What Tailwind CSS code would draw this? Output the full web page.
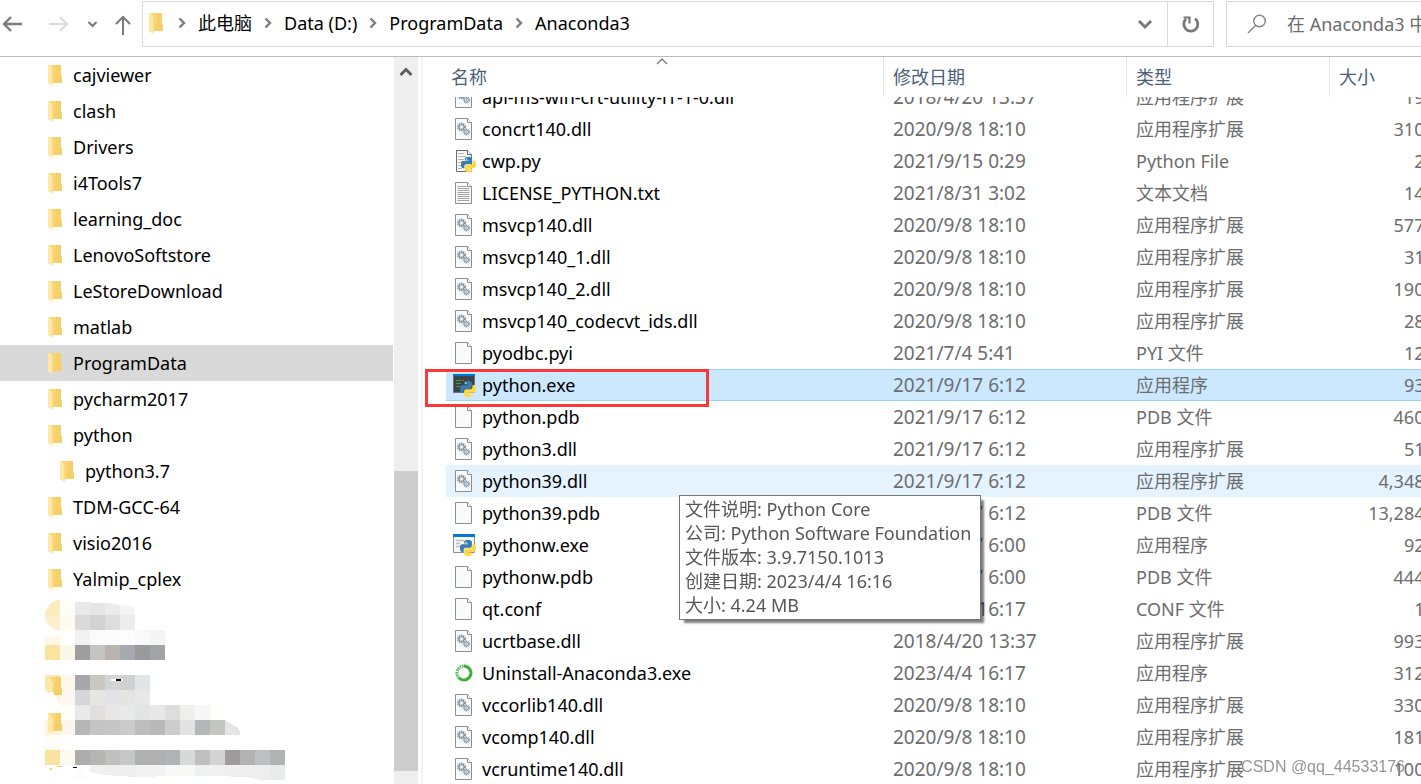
<!DOCTYPE html>
<html lang="zh-CN">
<head>
    <meta charset="UTF-8">
    <meta name="viewport" content="width=device-width, initial-scale=1.0">
    <title>Anaconda3</title>
    <script src="https://cdn.jsdelivr.net/npm/@tailwindcss/browser@4"></script>
</head>
<body class="relative flex h-screen flex-col overflow-hidden bg-white font-['Noto_Sans','Noto_Sans_CJK_SC',sans-serif] text-[18px] leading-6 text-black">

    <!-- Icons -->
    <svg class="hidden" aria-hidden="true">
        <symbol id="folder" viewBox="0 0 16 22">
            <path d="M3 1h11v11l1 1v6H3z" fill="#f9d873"/>
            <path d="M9 1h5v11l1 1v6H7z" fill="#f5d06a"/>
            <path d="M5 4l1 1v14l-1 3z" fill="#f0c860"/>
            <path d="M1 1h2l2.500 4v16.500L1 19.500z" fill="#ffe8a6"/>
        </symbol>
        <symbol id="page" viewBox="0 0 24 24">
            <path d="M3.500 1.500h12l4 4v17h-16z" fill="#f9fafb" stroke="#8e8e8e"/>
            <path d="M15.500 1.500v4h4" fill="#fff" stroke="#8e8e8e"/>
        </symbol>
        <symbol id="dll" viewBox="0 0 24 24">
            <use href="#page"/>
            <circle cx="9.500" cy="10" r="3.500" fill="#dfe3e6" stroke="#87929b" stroke-width="2" stroke-dasharray="1.4 .8"/>
            <circle cx="9.500" cy="10" r="2.600" fill="#c9d0d5" stroke="#87929b"/>
            <circle cx="9.500" cy="10" r="1.100" fill="#fff"/>
            <circle cx="14.500" cy="15" r="2.600" fill="#fff" stroke="#7f98ab" stroke-width="1.600" stroke-dasharray="1.2 .7"/>
            <circle cx="14.500" cy="15" r="2" fill="#e6eef4" stroke="#7f98ab" stroke-width=".8"/>
            <circle cx="14.500" cy="15" r=".8" fill="#7f98ab"/>
        </symbol>
        <symbol id="txt" viewBox="0 0 24 24">
            <use href="#page"/>
            <path d="M5.500 5.500h9M5.500 7.500h12M5.500 9.500h12M5.500 11.500h12M5.500 13.500h12M5.500 15.500h12M5.500 17.500h12M5.500 19.500h12" stroke="#a3a3a3"/>
        </symbol>
        <symbol id="python" viewBox="0 0 24 24">
            <path fill="#3a7bb0" d="M14.25.18l.9.2.73.26.59.3.45.32.34.34.25.34.16.33.1.3.04.26.02.2-.01.13V8.5l-.05.63-.13.55-.21.46-.26.38-.3.31-.33.25-.35.19-.35.14-.33.1-.3.07-.26.04-.21.02H8.77l-.69.05-.59.14-.5.22-.41.27-.33.32-.27.35-.2.36-.15.37-.1.35-.07.32-.04.27-.02.21v3.06H3.17l-.21-.03-.28-.07-.32-.12-.35-.18-.36-.26-.36-.36-.35-.46-.32-.59-.28-.73-.21-.88-.14-1.05-.05-1.23.06-1.22.16-1.04.24-.87.32-.71.36-.57.4-.44.42-.33.42-.24.4-.16.36-.1.32-.05.24-.01h.16l.06.01h8.16v-.83H6.18l-.01-2.75-.02-.37.05-.34.11-.31.17-.28.25-.26.31-.23.38-.2.44-.18.51-.15.58-.12.64-.1.71-.06.77-.04.84-.02 1.27.05z"/>
            <path fill="#ffd845" d="M21.1 6.11l.28.06.32.12.35.18.36.27.36.35.35.47.32.59.28.73.21.88.14 1.04.05 1.23-.06 1.23-.16 1.04-.24.86-.32.71-.36.57-.4.45-.42.33-.42.24-.4.16-.36.09-.32.05-.24.02-.16-.01h-8.22v.82h5.84l.01 2.76.02.36-.05.34-.11.31-.17.29-.25.25-.31.24-.38.2-.44.17-.51.15-.58.13-.64.09-.71.07-.77.04-.84.01-1.27-.04-1.07-.14-.9-.2-.73-.25-.59-.3-.45-.33-.34-.34-.25-.34-.16-.33-.1-.3-.04-.25-.02-.2.01-.13v-5.34l.05-.64.13-.54.21-.46.26-.38.3-.32.33-.24.35-.2.35-.14.33-.1.3-.06.26-.04.21-.02.13-.01h5.84l.69-.05.59-.14.5-.21.41-.28.33-.32.27-.35.2-.36.15-.36.1-.35.07-.32.04-.28.02-.21V6.07h2.09l.14.01z"/>
            <circle cx="8.700" cy="3.200" r="1.100" fill="#fff"/>
            <circle cx="15.300" cy="20.800" r="1.100" fill="#fff"/>
        </symbol>
        <symbol id="py" viewBox="0 0 24 24">
            <path d="M4.500 1.500h11l4 4v17h-15z" fill="#fafafa" stroke="#6b6b6b"/>
            <path d="M15.500 1.500v4h4" fill="#fff" stroke="#6b6b6b"/>
            <path d="M6 4.500h6M6 7.500h8M6 10.500h6M6 13.500h4M6 16.500h3M6 19.500h4" stroke="#b5b5b5"/>
            <use href="#python" x="9" y="8" width="15" height="15"/>
        </symbol>
        <symbol id="console" viewBox="0 0 24 24">
            <path d="M1 1h22v19H1z" fill="#6f7478"/>
            <path d="M2 3h20v16H2z" fill="#3f4244"/>
            <path d="M1 1h22v2H1z" fill="#0078d7"/>
            <path d="M4 7.500h5M10 7.500h2M4 10.500h5M4 13.500h4" stroke="#3f9b42"/>
            <use href="#python" x="8" y="8" width="16" height="16"/>
        </symbol>
        <symbol id="window" viewBox="0 0 24 24">
            <path d="M1.500 1.500h21v18h-21z" fill="#f6f6f6" stroke="#8b8f92"/>
            <path d="M1 1h22v3H1z" fill="#0078d7"/>
            <path d="M4 7.500h8M4 10.500h4M4 13.500h5" stroke="#c0c0c0" stroke-width="1.500"/>
            <use href="#python" x="8" y="7" width="16" height="16"/>
        </symbol>
        <symbol id="anaconda" viewBox="0 0 24 24">
            <path d="M12 5a7 7 0 1 1-5 12" fill="none" stroke="#3eae3a" stroke-width="3"/>
            <path d="M7 17a7 7 0 0 1 5-12" fill="none" stroke="#55b952" stroke-width="3" stroke-dasharray="1.6 .8"/>
        </symbol>
        <symbol id="crumb" viewBox="0 0 8 12">
            <path d="M1.500 1.500L6 6l-4.500 4.500" fill="none" stroke="#7d7d7d" stroke-width="2.400"/>
        </symbol>
    </svg>

    <header class="flex h-[57px] shrink-0 items-start border-b border-[#bcbcbc] pt-px">
        <nav class="flex h-[46px] w-[142px] shrink-0 items-center text-[#7a7a7a]">
            <button type="button" aria-label="后退">
                <svg class="size-6" viewBox="0 0 24 24" fill="none" stroke="currentColor" stroke-width="2.400"><path d="M22 12H4M11 5l-7 7 7 7"/></svg>
            </button>
            <button type="button" aria-label="前进" class="ml-[22px] text-[#dcdcdc]">
                <svg class="size-6" viewBox="0 0 24 24" fill="none" stroke="currentColor" stroke-width="2.200"><path d="M3 12h18M14 5l7 7-7 7"/></svg>
            </button>
            <button type="button" aria-label="最近浏览的位置" class="ml-3.5">
                <svg class="size-4" viewBox="0 0 16 16" fill="none" stroke="currentColor" stroke-width="2.200"><path d="M4.500 6l4 4 4-4"/></svg>
            </button>
            <button type="button" aria-label="上移" class="ml-[11px]">
                <svg class="size-6" viewBox="0 0 24 24" fill="none" stroke="currentColor" stroke-width="2"><path d="M12 23V5M5 12l7-7 7 7"/></svg>
            </button>
        </nav>

        <div class="flex h-[46px] min-w-0 flex-1 border border-[#d9d9d9]">
            <div class="flex min-w-0 flex-1 items-center gap-3 pb-0.5 pl-[5px]">
                <svg class="h-[22px] w-4"><use href="#folder"/></svg>
                <svg class="ml-0.5 h-3 w-2"><use href="#crumb"/></svg>
                <a href="#">此电脑</a>
                <svg class="h-3 w-2"><use href="#crumb"/></svg>
                <a href="#">Data (D:)</a>
                <svg class="h-3 w-2"><use href="#crumb"/></svg>
                <a href="#">ProgramData</a>
                <svg class="h-3 w-2"><use href="#crumb"/></svg>
                <a href="#">Anaconda3</a>
            </div>
            <button type="button" aria-label="展开" class="flex w-11 items-center justify-center">
                <svg class="size-4" viewBox="0 0 16 16" fill="none" stroke="#7a7a7a" stroke-width="3"><path d="M2 5l6 6 6-6"/></svg>
            </button>
            <button type="button" aria-label="刷新" class="flex w-[46px] items-center justify-center border-l border-[#d9d9d9]">
                <svg class="size-5" viewBox="0 0 20 20" fill="none" stroke="#777" stroke-width="2.800"><path d="M14 4.500A7 7 0 1 1 5 5"/><path d="M2.500 3.500h6v6" stroke-width="2.200"/></svg>
            </button>
        </div>

        <label class="ml-3 flex h-[46px] w-[195px] shrink-0 items-center border border-r-0 border-[#d9d9d9] pl-5">
            <svg class="size-5 shrink-0" viewBox="0 0 20 20" fill="none" stroke="#848484" stroke-width="1.400"><circle cx="12.500" cy="7" r="5.800"/><path d="M8.500 11.500L1 19"/></svg>
            <input type="text" aria-label="搜索" placeholder="在 Anaconda3 中搜索" class="ml-5 min-w-0 flex-1 placeholder:text-[#6d6d6d] focus:outline-none">
        </label>
    </header>

    <div class="flex min-h-0 flex-1">
        <!-- Navigation pane -->
        <aside class="w-[394px] shrink-0 overflow-hidden pr-px">
            <ul id="tree"></ul>
            <svg class="ml-11 h-[187px] w-[242px]" viewBox="-1 0 242 187" shape-rendering="crispEdges" aria-hidden="true">
                <g id="mosaic"></g>
                <use href="#folder" x="2" y="79" width="16" height="22"/>
                <use href="#folder" x="2" y="115" width="16" height="22"/>
                <path d="M8 95l7 13H0V96z" fill="#fff"/>
                <path d="M66 82h12v2H66z" fill="#fff"/>
                <path d="M71 82h5v2h-5zM28 170h4v1h-4z" fill="#111"/>
                <path d="M12 169h5v1h-5zM5 171h2v2H5z" fill="#f6cf68"/>
            </svg>
        </aside>

        <div class="flex w-6 shrink-0 flex-col bg-[#efefef]">
            <button type="button" aria-label="向上滚动" class="flex h-[30px] items-center justify-center">
                <svg class="size-4" viewBox="0 0 16 16" fill="none" stroke="#5c5c5c" stroke-width="2.800"><path d="M2.500 11L8 5.500l5.500 5.500"/></svg>
            </button>
            <div class="h-[384px] shrink"></div>
            <div class="min-h-10 flex-1 bg-[#cdcdcd]"></div>
            <div class="h-[13px] shrink-0"></div>
        </div>
        <div class="ml-[3px] w-0.5 shrink-0 bg-[#f4f4f4]"></div>

        <!-- File list -->
        <main class="relative ml-px min-w-0 flex-1">
            <div class="h-full overflow-hidden">
                <!-- list is scrolled down by half a row, the header stays put -->
                <table class="-mt-4 ml-[22px] w-[1014px] table-fixed border-separate border-spacing-0 whitespace-nowrap text-left">
                    <thead class="text-[#4c607a]">
                        <tr class="h-10">
                            <th scope="col" class="sticky top-0 z-10 w-[438px] border-r border-[#e5e5e5] bg-white p-0 pl-[5px] font-normal">名称
                                <svg class="absolute top-0 left-[210px] h-2 w-3" viewBox="0 0 12 8" fill="none" stroke="#6d6d6d" stroke-width="1.200"><path d="M1 7l5-5 5 5"/></svg>
                            </th>
                            <th scope="col" class="sticky top-0 z-10 w-[243px] border-r border-[#e5e5e5] bg-white p-0 pl-[9px] font-normal">修改日期</th>
                            <th scope="col" class="sticky top-0 z-10 w-[203px] border-r border-[#e5e5e5] bg-white p-0 pl-[9px] font-normal">类型</th>
                            <th scope="col" class="sticky top-0 z-10 w-[130px] bg-white p-0 pl-[9px] font-normal">大小</th>
                        </tr>
                    </thead>
                    <tbody id="files"></tbody>
                </table>
            </div>

            <div role="tooltip" class="absolute top-[438px] left-[255px] z-20 border border-[#767676] bg-white pt-px pr-[9px] pb-0.5 pl-[5px] whitespace-nowrap text-[#575757] shadow-[4px_4px_2px_-1px_rgba(0,0,0,0.5)]">
                <p>文件说明: Python Core</p>
                <p>公司: Python Software Foundation</p>
                <p>文件版本: 3.9.7150.1013</p>
                <p>创建日期: 2023/4/4 16:16</p>
                <p>大小: 4.24 MB</p>
            </div>
        </main>
    </div>

    <div class="absolute right-4 bottom-[5px] z-20 font-['Liberation_Sans',sans-serif] text-[16px] text-[#8a8a8a]/90">CSDN @qq_44533176</div>

    <script>
        const folders = [
            'cajviewer', 'clash', 'Drivers', 'i4Tools7', 'learning_doc', 'LenovoSoftstore', 'LeStoreDownload',
            'matlab', 'ProgramData', 'pycharm2017', 'python', 'python3.7', 'TDM-GCC-64', 'visio2016', 'Yalmip_cplex'
        ];

        const DLL = '应用程序扩展';
        const EXE = '应用程序';

        // icon, name, modified, type, size in KB
        const files = [
            ['dll', 'api-ms-win-crt-utility-l1-1-0.dll', '2018/4/20 13:37', DLL, '19'],
            ['dll', 'concrt140.dll', '2020/9/8 18:10', DLL, '310'],
            ['py', 'cwp.py', '2021/9/15 0:29', 'Python File', '2'],
            ['txt', 'LICENSE_PYTHON.txt', '2021/8/31 3:02', '文本文档', '14'],
            ['dll', 'msvcp140.dll', '2020/9/8 18:10', DLL, '577'],
            ['dll', 'msvcp140_1.dll', '2020/9/8 18:10', DLL, '31'],
            ['dll', 'msvcp140_2.dll', '2020/9/8 18:10', DLL, '190'],
            ['dll', 'msvcp140_codecvt_ids.dll', '2020/9/8 18:10', DLL, '28'],
            ['page', 'pyodbc.pyi', '2021/7/4 5:41', 'PYI 文件', '12'],
            ['console', 'python.exe', '2021/9/17 6:12', EXE, '93'],
            ['page', 'python.pdb', '2021/9/17 6:12', 'PDB 文件', '460'],
            ['dll', 'python3.dll', '2021/9/17 6:12', DLL, '51'],
            ['dll', 'python39.dll', '2021/9/17 6:12', DLL, '4,348'],
            ['page', 'python39.pdb', '2021/9/17 6:12', 'PDB 文件', '13,284'],
            ['window', 'pythonw.exe', '2021/9/17 6:00', EXE, '92'],
            ['page', 'pythonw.pdb', '2021/9/17 6:00', 'PDB 文件', '444'],
            ['page', 'qt.conf', '2023/4/4 16:17', 'CONF 文件', '1'],
            ['dll', 'ucrtbase.dll', '2018/4/20 13:37', DLL, '993'],
            ['anaconda', 'Uninstall-Anaconda3.exe', '2023/4/4 16:17', EXE, '312'],
            ['dll', 'vccorlib140.dll', '2020/9/8 18:10', DLL, '330'],
            ['dll', 'vcomp140.dll', '2020/9/8 18:10', DLL, '181'],
            ['dll', 'vcruntime140.dll', '2020/9/8 18:10', DLL, '100']
        ];

        document.getElementById('tree').innerHTML = folders.map(name => {
            const indent = name === 'python3.7' ? 'pl-[59px]' : 'pl-[47px]';
            const current = name === 'ProgramData' ? 'bg-[#d9d9d9]' : '';
            return `<li><a href="#" class="flex h-9 items-center gap-2.5 ${indent} ${current}">
                <svg class="h-[22px] w-4"><use href="#folder"/></svg>${name}</a></li>`;
        }).join('');

        document.getElementById('files').innerHTML = files.map(([icon, name, date, type, size]) => {
            let line = '';
            let mark = '';
            if (name === 'python.exe') {
                line = 'bg-[#cce8ff] border-y border-[#99d1ff]';
                mark = '<span class="absolute -top-px -left-[21px] z-10 h-[38px] w-[284px] border-3 border-[#fb3838]"></span>';
            } else if (name === 'python39.dll') {
                line = 'bg-[#e5f3ff]';
            }
            return `<tr class="h-8 text-[#6d6d6d]">
                <td class="relative p-0 pl-1.5 text-black ${line}"><div class="flex items-center gap-1.5"><svg class="size-6 shrink-0"><use href="#${icon}"/></svg>${name}</div>${mark}</td>
                <td class="p-0 pl-[9px] text-[19px] ${line}">${date}</td>
                <td class="p-0 pl-[9px] ${line}">${type}</td>
                <td class="p-0 pr-2 text-right ${line}">${size} KB</td>
            </tr>`;
        }).join('');

        // Blurred-out folder names: 15px cells, one string per row
        const cells = [
            [3, 'fbecc0 fefdf8 e9e9e9 e5e5e5 ebebeb f3f5f5'],
            [18, 'fcefcb fdfaf1 dadada d2d2d2 dddddd ebedef'],
            [33, 'fff8e6 fffffe f2f2f2 fbfbfb fcfcfc fdfdfd f9f9f9 f4f4f4'],
            [48, 'fae49f fbf8ea 9e9ea0 c4c4c2 bab4b0 a6aab0 9a9a9c a2a3a7'],
            [78, 'fde7ae fdf8ea a6a8ad cbc7c1 d1d5d8 d0d0d0 e2e4e6'],
            [93, 'fff3dc fbf7f2 d4d6d9 e8e6e4 e1e3e6 e4e4e2 e7e9e9'],
            [108, 'ffffff fffffb e8e9ea e0e0e0 e9e7e5 e7e9eb e3e4e4 e8e8e8 dddddd efefed f7f7f7 fefefc'],
            [123, 'fff5dc fdf6ee b4b7b6 c4c4c4 c8c6c4 cbcbcb bebebe b9b9b9 cdcdcd e2e2e2 b4b6b8 c3c5c1 e5e5e5'],
            [138, 'fffdf7 fefefe'],
            [153, 'fae39e fdfaf0 adadad b3b6b4 c1c0be c6c7ca b0b0b0 b0b0b0 b2b3b5 d8dad9 bfbfbf d3d3d3 9e9b9c b2b2b2 bdbfc1 b1b4b2'],
            [168, 'ffffff ffffff fcfcfc f0f0f0 eeeeee efefef f2f2f2 f2f2f2 f8f8f7 f8f8f7 eff1f0 f0f1f0 efefef eeeeee eeeeee e9ecea']
        ];

        document.getElementById('mosaic').innerHTML = cells.map(([y, row]) =>
            row.split(' ').map((color, i) => `<rect x="${i * 15}" y="${y}" width="15" height="15" fill="#${color}"/>`).join('')
        ).join('')
            // rounded brush edges
            + '<path d="M0 3h15A15 15.500 0 0 0 0 19zM0 19a15 15 0 0 0 15 14H0zM30 3h60v7L62 6 30 5zM0 33h15v5L0 41z" fill="#fff"/>'
            + '<path d="M180 108h15v27l-2-4-13-8zM40 183v-9l20 4 30 2 40-1 40 0 30 1 25 5v3H40z" fill="#fff"/>';
    </script>
</body>
</html>
